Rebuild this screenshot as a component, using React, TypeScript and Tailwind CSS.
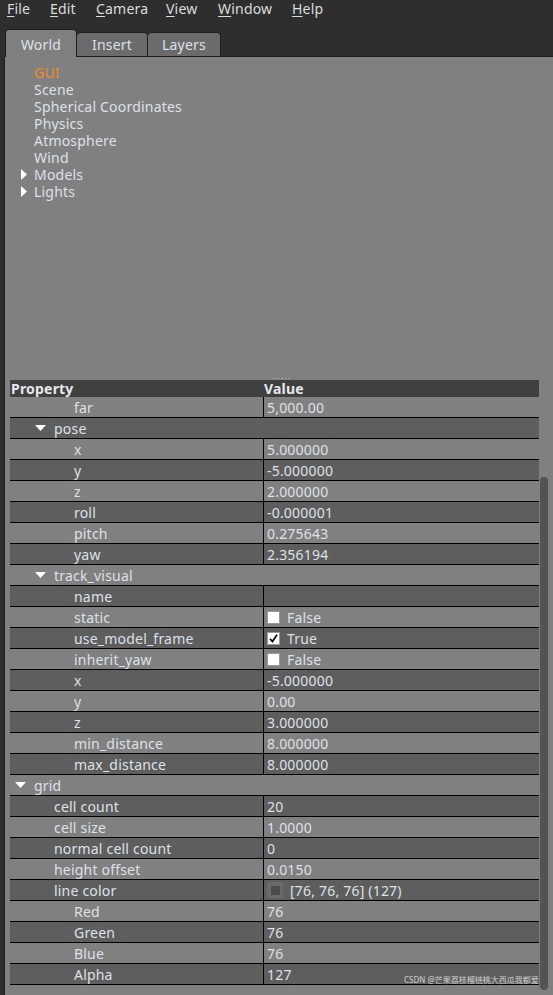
import React from "react";

type Row = {
  label: string;
  level: 0 | 1 | 2;
  group?: boolean;
  value?: string;
  check?: boolean;
  swatch?: boolean;
};

const rows: Row[] = [
  { label: "far", level: 2, value: "5,000.00" },
  { label: "pose", level: 1, group: true },
  { label: "x", level: 2, value: "5.000000" },
  { label: "y", level: 2, value: "-5.000000" },
  { label: "z", level: 2, value: "2.000000" },
  { label: "roll", level: 2, value: "-0.000001" },
  { label: "pitch", level: 2, value: "0.275643" },
  { label: "yaw", level: 2, value: "2.356194" },
  { label: "track_visual", level: 1, group: true },
  { label: "name", level: 2, value: "" },
  { label: "static", level: 2, value: "False", check: false },
  { label: "use_model_frame", level: 2, value: "True", check: true },
  { label: "inherit_yaw", level: 2, value: "False", check: false },
  { label: "x", level: 2, value: "-5.000000" },
  { label: "y", level: 2, value: "0.00" },
  { label: "z", level: 2, value: "3.000000" },
  { label: "min_distance", level: 2, value: "8.000000" },
  { label: "max_distance", level: 2, value: "8.000000" },
  { label: "grid", level: 0, group: true },
  { label: "cell count", level: 1, value: "20" },
  { label: "cell size", level: 1, value: "1.0000" },
  { label: "normal cell count", level: 1, value: "0" },
  { label: "height offset", level: 1, value: "0.0150" },
  { label: "line color", level: 1, value: "[76, 76, 76] (127)", swatch: true },
  { label: "Red", level: 2, value: "76" },
  { label: "Green", level: 2, value: "76" },
  { label: "Blue", level: 2, value: "76" },
  { label: "Alpha", level: 2, value: "127" },
];

const indent = ["pl-[24px]", "pl-[44px]", "pl-[64px]"];
const arrowIndent = ["pl-[5px]", "pl-[25px]", "pl-[45px]"];

function DownArrow() {
  return (
    <svg width="11" height="6" viewBox="0 0 11 6" className="mr-[8px] shrink-0">
      <polygon points="0,0 11,0 5.5,6" fill="#ffffff" />
    </svg>
  );
}

function RightArrow() {
  return (
    <svg width="6" height="11" viewBox="0 0 6 11" className="shrink-0">
      <polygon points="0,0 6,5.5 0,11" fill="#ffffff" />
    </svg>
  );
}

function CheckBox({ on }: { on: boolean }) {
  return (
    <div className="w-[13px] h-[13px] bg-white border border-[#9a9a9a] flex items-center justify-center mr-[7px] shrink-0">
      {on && (
        <svg width="11" height="11" viewBox="0 0 11 11">
          <path d="M2 5.8 L4.4 8.6 L9 1.8" stroke="#000" strokeWidth="1.7" fill="none" />
        </svg>
      )}
    </div>
  );
}

function PropRow({ row, dark }: { row: Row; dark: boolean }) {
  const bg = dark ? "bg-[#5e5e5e]" : "bg-[#808080]";
  if (row.group) {
    return (
      <div className={`h-[21px] border-b border-black flex items-center ${bg} ${arrowIndent[row.level]}`}>
        <DownArrow />
        <span>{row.label}</span>
      </div>
    );
  }
  return (
    <div className={`h-[21px] border-b border-black flex ${bg}`}>
      <div className={`w-[253px] shrink-0 flex items-center ${indent[row.level]}`}>{row.label}</div>
      <div className="flex-1 border-l border-black flex items-center pl-[3px]">
        {row.check !== undefined && <CheckBox on={row.check} />}
        {row.swatch && (
          <div className="w-[16px] h-[16px] bg-[#6a6a6a] flex items-center justify-center mr-[7px] shrink-0">
            <div className="w-[9px] h-[9px] bg-[#4c4c4c]" />
          </div>
        )}
        <span>{row.value}</span>
      </div>
    </div>
  );
}

const menu = [
  { t: "File", w: "w-[43px]" },
  { t: "Edit", w: "w-[46px]" },
  { t: "Camera", w: "w-[70px]" },
  { t: "View", w: "w-[52px]" },
  { t: "Window", w: "w-[74px]" },
  { t: "Help", w: "w-[50px]" },
];

const tree = ["Scene", "Spherical Coordinates", "Physics", "Atmosphere", "Wind"];

export default function App() {
  return (
    <div
      className="w-[553px] h-[995px] bg-[#2e2e2e] flex flex-col overflow-hidden text-[14px] tracking-[0.2px] text-[#dde1e8] relative"
      style={{ fontFamily: '"Noto Sans", "DejaVu Sans", sans-serif' }}
    >
      {/* menu bar */}
      <div className="h-[29px] flex pl-[7px] leading-[17px] text-[#dcdcdc] shrink-0">
        {menu.map((m) => (
          <div key={m.t} className={m.w}>
            <span className="underline decoration-1 underline-offset-2 [text-decoration-skip-ink:none]">{m.t[0]}</span>
            {m.t.slice(1)}
          </div>
        ))}
      </div>

      {/* tabs */}
      <div className="h-[28px] flex items-end pl-[5px] shrink-0">
        <div className="w-[72px] h-[28px] pt-[1px] bg-[#7f7f7f] border border-b-0 border-[#1e1e1e] rounded-t-[4px] flex items-center justify-center text-[#dde1e8]">
          World
        </div>
        <div className="w-[71px] h-[25px] bg-[#6b6b6b] border border-l-0 border-[#1e1e1e] rounded-t-[4px] flex items-center justify-center">
          Insert
        </div>
        <div className="w-[73px] h-[25px] bg-[#6b6b6b] border border-l-0 border-[#1e1e1e] rounded-t-[4px] flex items-center justify-center">
          Layers
        </div>
        <div className="flex-1 border-b border-[#1e1e1e]" />
      </div>

      {/* tab page */}
      <div className="flex-1 ml-[4px] border-l border-[#1e1e1e] bg-[#808080] flex flex-col">
        <div className="h-[316px] pt-[7px] leading-[17px] shrink-0">
          <div className="pl-[29px] text-[#f08a24]">GUI</div>
          {tree.map((t) => (
            <div key={t} className="pl-[29px]">
              {t}
            </div>
          ))}
          {["Models", "Lights"].map((t) => (
            <div key={t} className="flex items-center pl-[16px]">
              <RightArrow />
              <span className="ml-[7px]">{t}</span>
            </div>
          ))}
        </div>

        {/* splitter handle */}
        <div className="h-[7px] flex items-end pb-[1px] pl-[268px] gap-[2px] shrink-0">
          {[0, 1, 2, 3, 4, 5].map((i) => (
            <div key={i} className="w-[1px] h-[1px] bg-[#b4b4b4]" />
          ))}
        </div>

        {/* property table */}
        <div className="flex">
          <div className="w-[529px] ml-[5px] shrink-0">
            <div className="h-[17px] bg-[#404040] flex items-center font-bold text-[#e6e8ec]">
              <div className="w-[253px] pl-[1px]">Property</div>
              <div className="pl-[1px]">Value</div>
            </div>
            {rows.map((r, i) => (
              <PropRow key={i} row={r} dark={i % 2 === 1} />
            ))}
          </div>
          <div className="w-[8px] ml-[1px] mt-[97px] h-[513px] rounded-full bg-[#535353]" />
        </div>
      </div>

      <div
        className="absolute left-[404px] top-[975px] whitespace-nowrap text-[8px] leading-[9px] tracking-normal text-[#e8e8e8] opacity-80"
        style={{ fontFamily: '"Noto Sans", "Noto Sans CJK SC", sans-serif' }}
      >
        CSDN @芒果荔枝榴梿桃大西瓜我都爱
      </div>
    </div>
  );
}
